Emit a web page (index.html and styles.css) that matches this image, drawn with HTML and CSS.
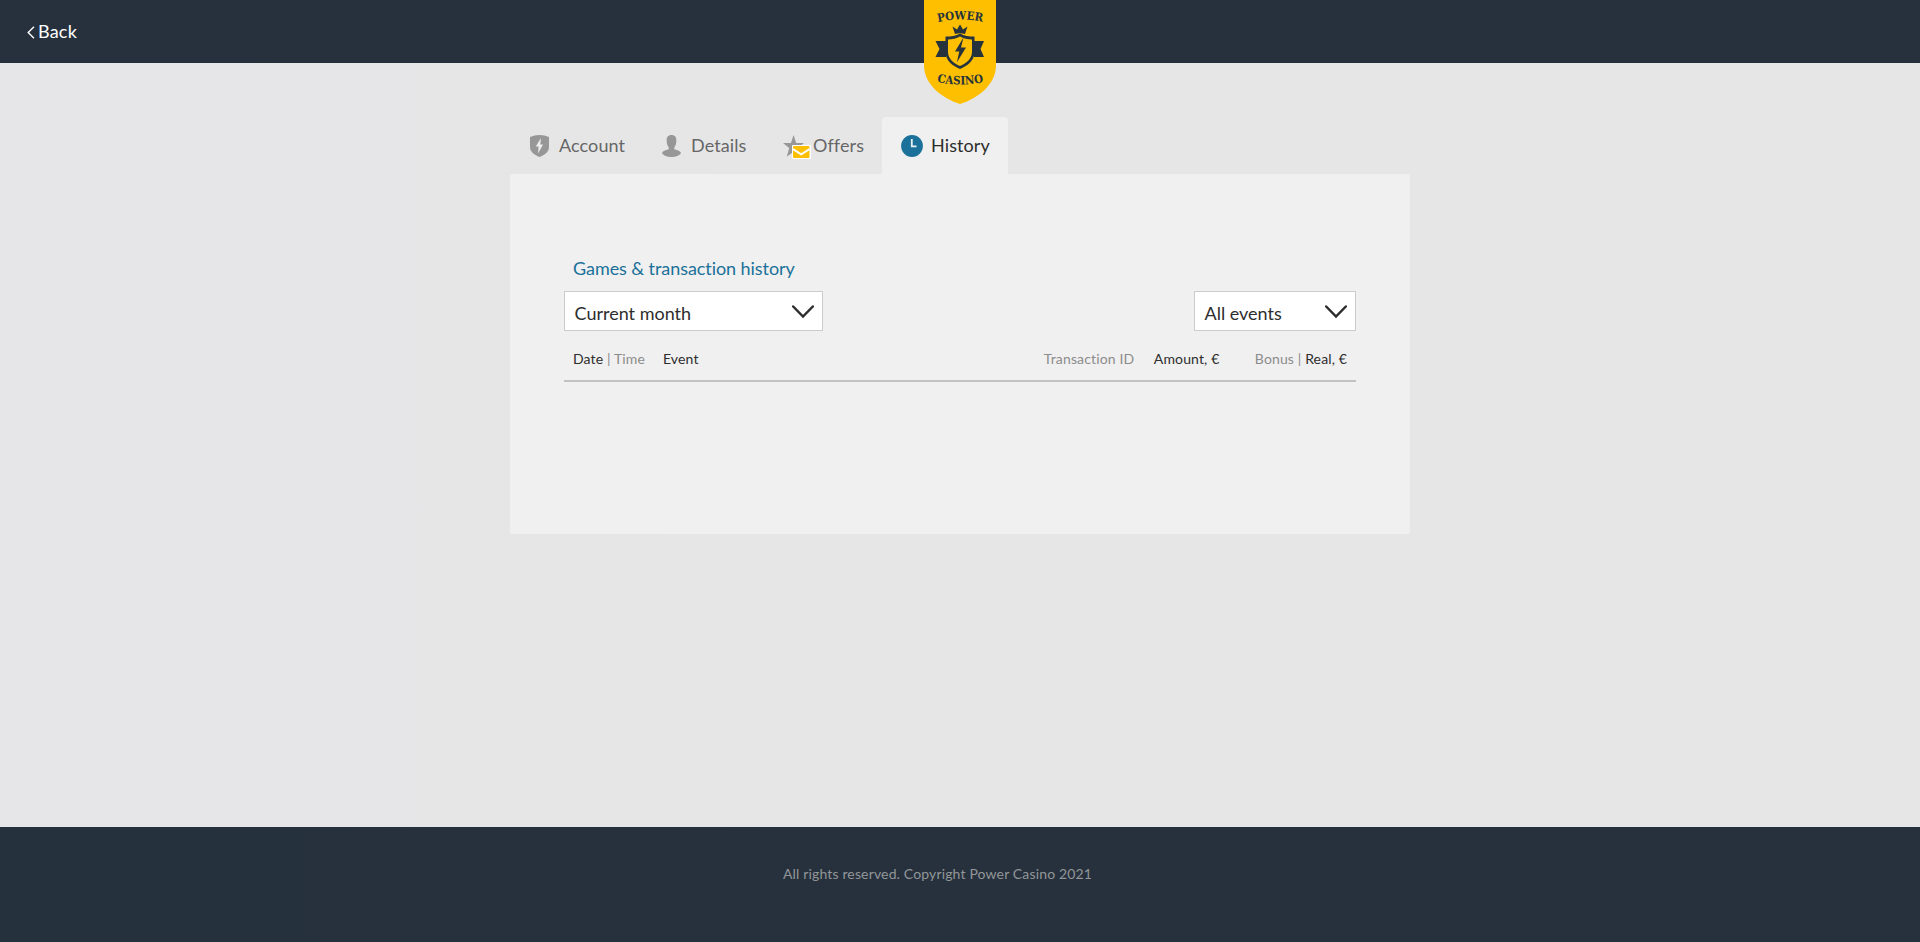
FILE: index.html
```html
<!DOCTYPE html>
<html lang="en">
<head>
<meta charset="utf-8">
<title>Power Casino – History</title>
<link rel="stylesheet" href="styles.css">
</head>
<body>
<header class="header">
  <a class="back"><svg class="back-icon" width="8" height="13" viewBox="0 0 8 13"><path d="M7 .7 1.2 6.5 7 12.3" fill="none" stroke="#fff" stroke-width="1.4"/></svg>Back</a>
  <svg class="logo" width="72" height="104" viewBox="0 0 72 104">
    <path d="M0 0H72V65C72 84 55 98 36 104C17 98 0 84 0 65Z" fill="#fdbf00"/>
    <defs>
      <path id="arc-top" d="M12 22.500Q36 16.500 62 22.500"/>
      <path id="arc-bottom" d="M11 81.500Q36 87.500 62 81.500"/>
    </defs>
    <g class="logo-text">
      <text><textPath href="#arc-top" startOffset="2" textLength="45" lengthAdjust="spacingAndGlyphs">POWER</textPath></text>
      <text><textPath href="#arc-bottom" startOffset="2" textLength="47" lengthAdjust="spacingAndGlyphs">CASINO</textPath></text>
    </g>
    <g fill="#26323c">
      <path d="M11.500 41H22V57H11.500L15.500 49ZM60 41H50V57H60L56.500 49Z"/>
      <path d="M31 34 28.500 26.500 33 29.500 36 24.500 39 29.500 43.500 26.500 41 34Q36 32.500 31 34Z"/>
      <path d="M36 33.500C40 36 45 36.500 50.500 36.500V52C50.500 61 43 66 36 69C29 66 21.500 61 21.500 52V36.500C27 36.500 32 36 36 33.500Z"/>
      <path d="M36 36.500C39.500 38.500 43.500 39.300 48 39.500V52C48 59 42 63.500 36 66C30 63.500 24 59 24 52V39.500C28.500 39.300 32.500 38.500 36 36.500Z" fill="#fdbf00"/>
      <path d="M39.500 37.500 31 51.500H35.300L32.800 62.500 42 47.500H37Z"/>
    </g>
  </svg>
</header>

<main class="content">
  <nav class="tabs">
    <a class="tab tab-account"><span class="tab-icon"><svg width="19" height="22" viewBox="0 0 19 22"><path d="M9.500 0C13 0 16 .7 19 2V12C19 17 14.500 20 9.500 22C4.500 20 0 17 0 12V2C3 .7 6 0 9.500 0Z" fill="#979797"/><path d="M11 3 5.800 11.500H8.700L8 18.500 13 9.500H10.200Z" fill="#efeff0"/></svg></span><span class="label">Account</span></a>
    <a class="tab tab-details"><span class="tab-icon"><svg width="19" height="22" viewBox="0 0 19 22"><path d="M9.500 0C13 0 14.500 2.300 14.300 5.500C14.300 8.500 13.800 10.500 12.300 12.300V14.300C16 15.300 18.500 16.300 19 18C17.500 20.700 13.500 22 9.500 22S1.500 20.700 0 18C.5 16.300 3 15.300 6.700 14.300V12.300C5.200 10.500 4.700 8.500 4.700 5.500C4.500 2.300 6 0 9.500 0Z" fill="#979797"/></svg></span><span class="label">Details</span></a>
    <a class="tab tab-offers"><span class="tab-icon"><svg width="28" height="24" viewBox="0 0 28 24"><path d="M10.500 0 13.200 8H21L14.700 13 17 21.500 10.500 17 3.800 21.500 6.200 13 0 8H8Z" fill="#979797"/><rect x="9" y="10" width="19" height="14" rx="1" fill="#fff"/><rect x="10" y="11" width="16.500" height="12" rx="1" fill="#fdbf00"/><path d="M10 14.200 18.200 19.300 26.500 14.200" fill="none" stroke="#fff" stroke-width="2"/></svg></span><span class="label">Offers</span></a>
    <a class="tab tab-history"><span class="tab-icon"><svg width="22" height="22" viewBox="0 0 22 22"><circle cx="11" cy="11" r="10.900" fill="#1b7199"/><path d="M10.800 4V11.300H15.500" fill="none" stroke="#e9f1f5" stroke-width="1.800"/></svg></span><span class="label">History</span></a>
  </nav>
  <section class="panel">
    <h1 class="title">Games &amp; transaction history</h1>
    <div class="filters">
      <div class="select select-period"><span>Current month</span><svg width="22" height="14" viewBox="0 0 22 14"><path d="M1.200 1.500 11 11.500 20.800 1.500" fill="none" stroke="#2d2d2d" stroke-width="2.500" stroke-linecap="round"/></svg></div>
      <div class="select select-events"><span>All events</span><svg width="22" height="14" viewBox="0 0 22 14"><path d="M1.200 1.500 11 11.500 20.800 1.500" fill="none" stroke="#2d2d2d" stroke-width="2.500" stroke-linecap="round"/></svg></div>
    </div>
    <div class="columns">
      <span class="col-date">Date <span class="muted">| Time</span></span>
      <span class="col-event">Event</span>
      <span class="col-id muted">Transaction ID</span>
      <span class="col-amount">Amount, €</span>
      <span class="col-real"><span class="muted">Bonus |</span> Real, €</span>
    </div>
  </section>
</main>

<footer class="footer">All rights reserved. Copyright Power Casino 2021</footer>
</body>
</html>
```

FILE: styles.css
```css
* { box-sizing: border-box; }
body {
  margin: 0;
  height: 942px;
  display: flex;
  flex-direction: column;
  overflow: hidden;
  font-family: Lato, "Liberation Sans", sans-serif;
  font-size: 18px;
  font-variant-ligatures: none;
  color: #2d2d2d;
  background: linear-gradient(90deg, #e6e5e8 0, #e6e6e6 40%);
}
.header {
  position: relative;
  height: 63px;
  flex: none;
  background: #27313d;
}
.back {
  display: inline-flex;
  align-items: center;
  gap: 3px;
  height: 62px;
  padding-left: 27px;
  letter-spacing: 0.2px;
  color: #fff;
}
.back-icon { margin-top: 2px; }
.logo { position: absolute; left: 924px; top: 0; }
.logo-text {
  font-family: "DejaVu Serif", serif;
  font-weight: bold;
  font-size: 11.5px;
  fill: #26323c;
}
.content {
  width: 900px;
  flex: 1;
  margin: 0 auto;
  padding-top: 54px;
}
.tabs { display: flex; height: 57px; }
.tab {
  display: flex;
  align-items: center;
  padding-left: 20px;
  color: #666;
  white-space: nowrap;
}
.tab-icon { display: flex; width: 29px; flex: none; }
.label { padding-bottom: 2px; letter-spacing: 0.1px; }
.tab-account { width: 132px; }
.tab-details { width: 122px; }
.tab-offers { width: 118px; padding-left: 19px; }
.tab-offers .tab-icon { width: 30px; padding-top: 3px; }
.tab-history {
  width: 126px;
  padding-left: 19px;
  color: #2d2d2d;
  background: #f0f0f0;
  border-radius: 4px 4px 0 0;
}
.tab-history .tab-icon { width: 30px; }
.panel {
  height: 360px;
  padding: 83px 54px 0;
  background: #f0f0f0;
  border-radius: 2px;
}
.title {
  margin: 0 0 12px 9px;
  font-size: 18px;
  line-height: 22px;
  font-weight: 400;
  letter-spacing: -0.07px;
  color: #1b7199;
}
.filters { display: flex; justify-content: space-between; }
.select {
  display: flex;
  justify-content: space-between;
  align-items: center;
  height: 40px;
  padding: 4px 8px 0 9.5px;
  background: #fff;
  border: 1px solid #ccc;
}
.select svg { margin-bottom: 2px; }
.select-period { width: 259px; }
.select-events { width: 162px; }
.columns {
  display: flex;
  height: 51px;
  padding: 18px 9px 0;
  border-bottom: 2px solid #c2c2c2;
  font-size: 14px;
  line-height: 20px;
  letter-spacing: 0.14px;
  white-space: nowrap;
}
.muted { color: #8c8c8c; }
.col-date { width: 90px; }
.col-event { width: 381px; }
.col-id { width: 110px; }
.col-amount { width: 101px; }
.col-real { flex: 1; text-align: right; }
.footer {
  height: 115px;
  flex: none;
  padding: 37px 0 0 783px;
  font-size: 14px;
  line-height: 20px;
  letter-spacing: 0.15px;
  color: #929698;
  background: linear-gradient(90deg, #25313d, #27313d 50%);
}
```
